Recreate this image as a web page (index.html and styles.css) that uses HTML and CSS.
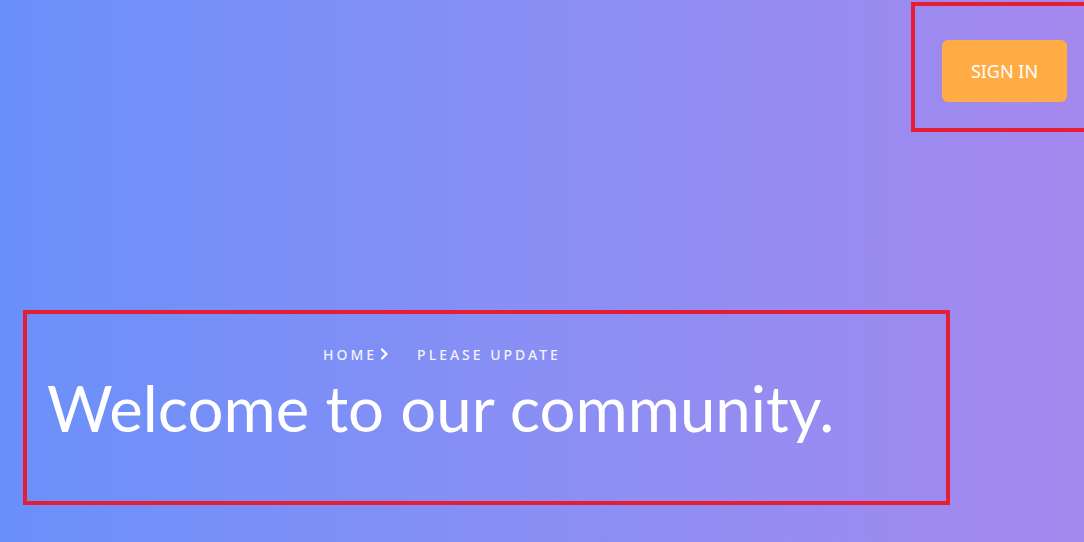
FILE: index.html
```html
<!DOCTYPE html>
<html>
<head>
<meta charset="utf-8">
<link rel="stylesheet" href="styles.css">
</head>
<body>
<div class="page">
  <header class="topbar">
    <div class="signin-box">
      <button class="signin">SIGN IN</button>
    </div>
  </header>
  <section class="hero">
    <nav class="crumbs">
      <span class="crumb">HOME</span>
      <svg class="chev" width="8" height="12" viewBox="0 0 8 12"><path d="M2 1.5 L6.5 6 L2 10.5" fill="none" stroke="#fff" stroke-width="2.2" stroke-linecap="round" stroke-linejoin="round"/></svg>
      <span class="crumb current">PLEASE UPDATE</span>
    </nav>
    <h1 class="title">Welcome to our community.</h1>
  </section>
</div>
</body>
</html>
```

FILE: styles.css
```css
html, body {
  margin: 0;
  padding: 0;
}
body {
  width: 1084px;
  height: 542px;
  overflow: hidden;
  font-family: "Noto Sans", "Open Sans", sans-serif;
}
.page {
  width: 1084px;
  height: 542px;
  background: linear-gradient(to right, #6a90fa 0%, #8a8ff4 50%, #a488ee 100%);
  display: flex;
  flex-direction: column;
}
.topbar {
  display: flex;
  justify-content: flex-end;
  padding-top: 2px;
}
.signin-box {
  width: 142px;
  height: 88px;
  border: 4px solid #e61e35;
  border-right: none;
  padding-left: 27px;
  padding-top: 34px;
}
.signin {
  width: 125px;
  height: 62px;
  background: #ffac45;
  border: none;
  border-radius: 6px;
  color: #fff;
  font-family: "Noto Sans", sans-serif;
  font-size: 18px;
  padding: 0;
}
.hero {
  margin-top: 178px;
  margin-left: 23px;
  width: 919px;
  height: 187px;
  border: 4px solid #e61e35;
}
.crumbs {
  display: flex;
  align-items: center;
  margin-left: 296px;
  margin-top: 30px;
  height: 20px;
}
.crumb {
  color: rgba(255,255,255,0.92);
  font-size: 14px;
  letter-spacing: 3px;
  font-weight: 500;
}
.chev {
  margin-left: 3px;
  margin-right: 29px;
}
.title {
  margin: 6px 0 0 20px;
  color: #fff;
  font-family: Lato, "Noto Sans", sans-serif;
  font-weight: 400;
  font-size: 63.5px;
  line-height: 76px;
}
```
